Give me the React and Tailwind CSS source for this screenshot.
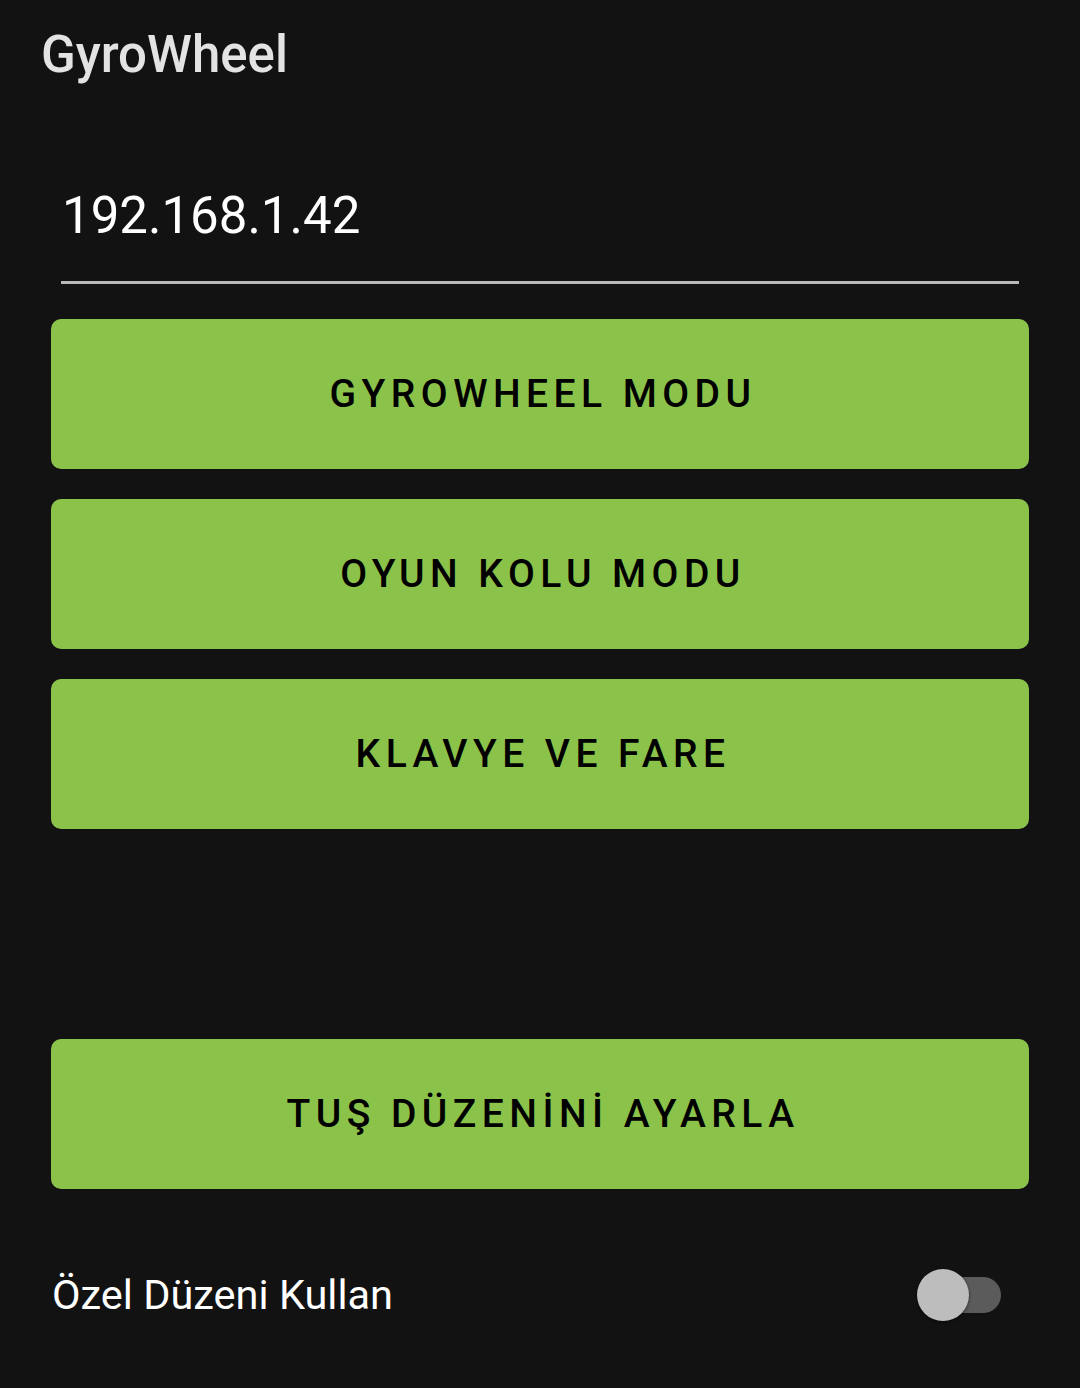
import React, { useState } from "react";

const buttons = ["GYROWHEEL MODU", "OYUN KOLU MODU", "KLAVYE VE FARE"];

function ModeButton({ label, className = "" }) {
  return (
    <button
      className={
        "mx-[51px] h-[150px] rounded-[10px] bg-[#8bc34a] text-black text-[39px] font-medium tracking-[0.14em] leading-none pl-[6px] flex items-center justify-center " +
        className
      }
    >
      {label}
    </button>
  );
}

export default function App() {
  const [ip, setIp] = useState("192.168.1.42");
  const [custom, setCustom] = useState(false);

  return (
    <div
      className="w-[1080px] h-[1388px] bg-[#121212] flex flex-col overflow-hidden"
      style={{ fontFamily: "Roboto, 'Noto Sans', sans-serif" }}
    >
      {/* toolbar */}
      <div className="h-[108px] px-[41px] pt-[29px]">
        <h1 className="text-[51px] leading-none font-medium text-[#e3e3e3]">GyroWheel</h1>
      </div>

      {/* ip field */}
      <div className="mx-[61px] mt-[78px] border-b-[3px] border-[#b9b9b9]">
        <input
          value={ip}
          onChange={(e) => setIp(e.target.value)}
          className="w-full bg-transparent outline-none text-white text-[51px] leading-none pl-[1px] pb-[36px]"
        />
      </div>

      <div className="flex flex-col gap-[30px] mt-[35px]">
        {buttons.map((b) => (
          <ModeButton key={b} label={b} />
        ))}
      </div>

      <ModeButton label="TUŞ DÜZENİNİ AYARLA" className="mt-[210px]" />

      {/* switch row */}
      <div className="flex items-center justify-between mt-[80px] pl-[52px] pr-[79px]">
        <span className="text-white text-[41.5px] leading-none">Özel Düzeni Kullan</span>
        <button
          onClick={() => setCustom(!custom)}
          className="relative w-[84px] h-[52px] flex items-center"
        >
          <span
            className={
              "absolute right-0 w-[76px] h-[36px] rounded-full " +
              (custom ? "bg-[#4f6f2b]" : "bg-[#5b5b5b]")
            }
          />
          <span
            className={
              "absolute w-[52px] h-[52px] rounded-full shadow-[0_1px_3px_rgba(0,0,0,0.6)] " +
              (custom ? "left-[32px] bg-[#8bc34a]" : "left-0 bg-[#bdbdbd]")
            }
          />
        </button>
      </div>
    </div>
  );
}
